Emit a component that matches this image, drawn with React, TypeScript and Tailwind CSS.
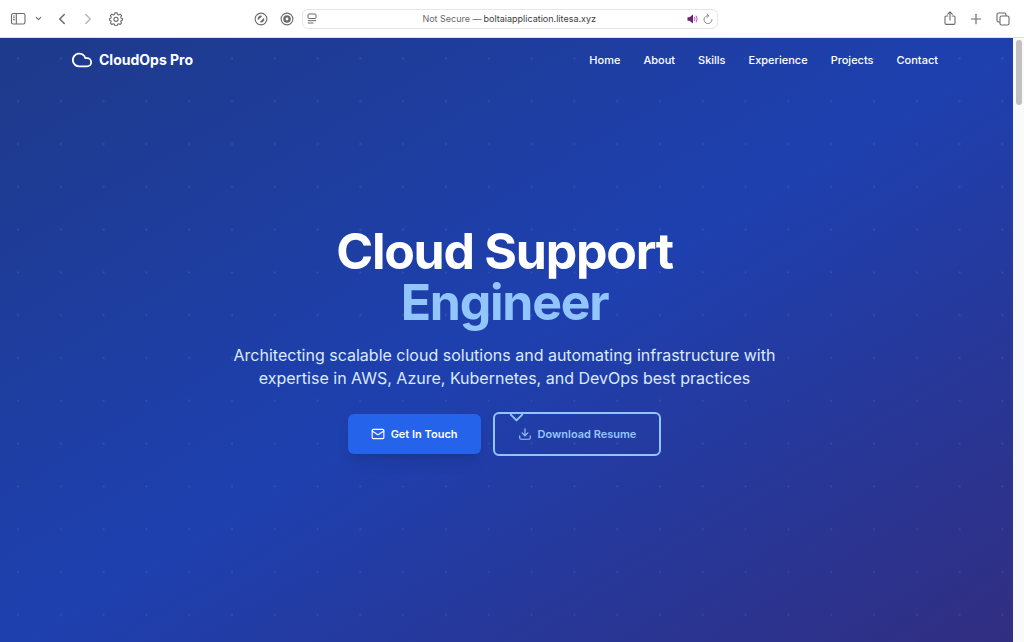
import React from 'react';
import { ChevronDown, ChevronLeft, ChevronRight, Cloud, Download, Mail, Plus } from 'lucide-react';

const navLinks = ['Home', 'About', 'Skills', 'Experience', 'Projects', 'Contact'];

const SidebarIcon = () => (
    <svg width="16" height="14" viewBox="0 0 16 14" fill="none" stroke="currentColor" strokeWidth="1.1">
        <rect x="1.5" y="1.5" width="13.5" height="10.5" rx="1.8" />
        <path d="M6.3 1.5v10.5M3.1 4h1.6M3.1 5.8h1.6M3.1 7.6h1.6" />
    </svg>
);

const GearIcon = () => (
    <svg width="14" height="14" viewBox="0 0 24 24" fill="none" stroke="currentColor" strokeWidth="1.8" strokeLinejoin="round">
        <path d="M10 1.5h4l.6 2.800 2 .8 2.400-1.500 2.600 2.600-1.500 2.400.8 2 2.100.4v3l-2.100.5-.8 2 1.500 2.300-2.600 2.700-2.400-1.500-2 .8-.6 2.700h-4l-.6-2.700-2-.8L5 21.500l-2.700-2.700 1.500-2.300-.8-2L1 14v-3l2-.4.8-2-1.500-2.400L5 3.600l2.400 1.500 2-.8z" />
        <circle cx="12" cy="12.5" r="3.6" />
    </svg>
);

const BlockerIcon = () => (
    <svg width="14" height="14" viewBox="0 0 14 14" fill="none" stroke="currentColor" strokeWidth="1.1">
        <circle cx="7" cy="7" r="5.9" />
        <path d="M3.900 8.200A3.300 3.300 0 0 1 8.200 3.900zM10.100 5.800A3.300 3.300 0 0 1 5.800 10.100z" fill="currentColor" stroke="none" />
    </svg>
);

const TargetIcon = () => (
    <svg width="14" height="14" viewBox="0 0 14 14" fill="none" stroke="currentColor">
        <circle cx="7" cy="7" r="5.9" strokeWidth="1.1" />
        <circle cx="7" cy="7" r="2.6" strokeWidth="2.4" />
    </svg>
);

const ReaderIcon = () => (
    <svg width="10" height="12" viewBox="0 0 10 12" fill="none" stroke="currentColor" strokeWidth="1">
        <rect x="1" y="1" width="8" height="4.5" rx="1" />
        <path d="M.8 7.700h8.400M.8 10h5.600" />
    </svg>
);

const SpeakerIcon = () => (
    <svg width="12" height="10" viewBox="0 0 12 10" fill="none">
        <path d="M.5 3.300h2L6 .6v8.800L2.500 6.700h-2z" fill="#6b2077" />
        <path d="M7.600 3.200q1 1.800 0 3.600M9.300 2q1.900 3 0 6" stroke="#b65bb8" strokeWidth="1" strokeLinecap="round" />
    </svg>
);

const ReloadIcon = () => (
    <svg width="10" height="12" viewBox="0 0 10 12" fill="none" stroke="currentColor" strokeWidth="1" strokeLinecap="round">
        <path d="M5.500 2.600A4 4 0 1 0 9 6.600M3.900.8l2 1.900-2 1.900" />
    </svg>
);

const ShareIcon = () => (
    <svg width="12" height="15" viewBox="0 0 12 15" fill="none" stroke="currentColor" strokeWidth="1.1" strokeLinecap="round" strokeLinejoin="round">
        <path d="M3.800 5H2.200Q1 5 1 6.200v6Q1 13.400 2.200 13.400h7.600q1.200 0 1.200-1.200v-6Q11 5 9.800 5H8.200M6 9V1M3.700 3.200 6 .9l2.300 2.300" />
    </svg>
);

const TabsIcon = () => (
    <svg width="14" height="14" viewBox="0 0 14 14" fill="none" stroke="currentColor" strokeWidth="1.1">
        <rect x="4" y="4" width="9" height="9" rx="1.6" />
        <path d="M4 10H2.600Q1 10 1 8.400V2.600Q1 1 2.600 1h5.800Q10 1 10 2.600V4" />
    </svg>
);

const BrowserBar: React.FC = () => (
    <header className="grid h-[38px] grid-cols-[1fr_416px_1fr] items-center border-b border-[#dcdfe6] bg-white pr-3.5 pl-2.5 text-[#6a6a6a]">
        <div className="flex items-center pr-2">
            <button aria-label="Sidebar"><SidebarIcon /></button>
            <button aria-label="Sidebar options" className="ml-2"><ChevronDown size={9} strokeWidth={3} /></button>
            <button aria-label="Back" className="ml-2.5"><ChevronLeft size={18} strokeWidth={2} /></button>
            <button aria-label="Forward" className="ml-2 text-[#b8b8b8]"><ChevronRight size={18} strokeWidth={2} /></button>
            <button aria-label="Page settings" className="ml-3"><GearIcon /></button>
            <div className="ml-auto flex gap-3">
                <button aria-label="Content blocker"><BlockerIcon /></button>
                <button aria-label="Privacy report"><TargetIcon /></button>
            </div>
        </div>
        <div className="flex h-5 items-center rounded-md border border-[#e6e6e6] px-1 text-[9px]">
            <button aria-label="Reader"><ReaderIcon /></button>
            <div className="flex flex-1 items-center justify-center gap-0.5 pl-5">
                <label htmlFor="address">Not Secure —</label>
                <input
                    id="address"
                    type="text"
                    defaultValue="boltaiapplication.litesa.xyz"
                    className="w-[118px] bg-transparent text-[#3c3c3c] outline-none"
                />
            </div>
            <button aria-label="Mute"><SpeakerIcon /></button>
            <button aria-label="Reload" className="ml-1 text-[#8a8a8a]"><ReloadIcon /></button>
        </div>
        <div className="flex items-center justify-end gap-3">
            <button aria-label="Share"><ShareIcon /></button>
            <button aria-label="New tab"><Plus size={16} strokeWidth={1.7} /></button>
            <button aria-label="Show tabs"><TabsIcon /></button>
        </div>
    </header>
);

const DotPattern = () => (
    <svg className="absolute inset-0 h-full w-full" aria-hidden="true">
        <defs>
            <pattern id="dots" width="42.8" height="42.8" patternUnits="userSpaceOnUse">
                <circle cx="18" cy="20.5" r="1" fill="#fff" fillOpacity="0.1" />
            </pattern>
        </defs>
        <rect width="100%" height="100%" fill="url(#dots)" />
    </svg>
);

const Navbar: React.FC = () => (
    <nav className="relative mx-auto flex h-11 w-full max-w-[915px] items-center justify-between px-6">
        <a href="#home" className="flex items-center gap-1.5 text-sm font-bold text-white">
            <Cloud size={22} strokeWidth={2} />
            CloudOps Pro
        </a>
        <ul className="flex gap-[23px] text-[11px] font-medium text-white">
            {navLinks.map((link) => (
                <li key={link}><a href={`#${link.toLowerCase()}`}>{link}</a></li>
            ))}
        </ul>
    </nav>
);

const Hero: React.FC = () => (
    <section className="relative flex flex-1 flex-col items-center justify-center px-6 pb-[42px] text-center">
        <h1 className="text-[50px] leading-[51px] font-bold tracking-tight text-white">
            Cloud Support
            <span className="block text-[#93c5fd]">Engineer</span>
        </h1>
        <p className="mt-4 max-w-[548px] text-base leading-[23px] text-[#dbeafe]">
            Architecting scalable cloud solutions and automating infrastructure with expertise in AWS, Azure, Kubernetes, and DevOps best practices
        </p>
        <div className="mt-[22px] flex items-center gap-3 text-[11px] font-semibold">
            <button className="flex h-10 items-center gap-1.5 rounded-md bg-[#2563eb] px-[23px] text-white shadow-lg">
                <Mail size={14} />
                Get In Touch
            </button>
            <button className="flex h-11 items-center gap-1.5 rounded-md border-2 border-[#93c5fd] px-[23px] text-[#93c5fd]">
                <Download size={14} />
                Download Resume
            </button>
        </div>
        {/* scroll hint */}
        <ChevronDown size={23} strokeWidth={2} className="absolute top-[324px] left-1/2 text-[#93c5fd]" />
    </section>
);

const App: React.FC = () => {
    return (
        <div className="flex min-h-screen flex-col font-['Inter','Liberation_Sans',sans-serif]">
            <BrowserBar />
            <div className="flex flex-1">
                <main className="relative flex flex-1 flex-col bg-linear-to-br/srgb from-[#1e3a8a] via-[#1e40af] to-[#312e81] pr-1">
                    <DotPattern />
                    <Navbar />
                    <Hero />
                </main>
                <div className="w-[11px] bg-[#fafafa] pt-0.5 pl-[3px]">
                    <div className="h-[65px] w-1.5 rounded-full bg-[#c1c1c1]" />
                </div>
            </div>
        </div>
    );
};

export default App;
